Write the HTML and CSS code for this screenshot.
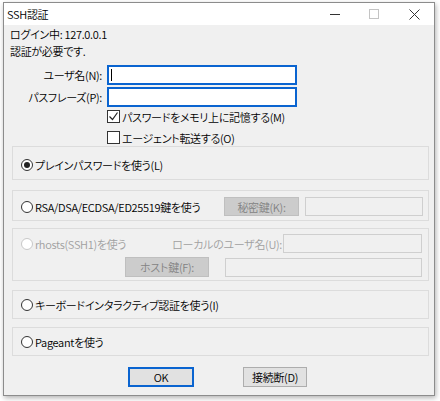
FILE: index.html
```html
<!DOCTYPE html>
<html lang="ja">
<head>
<meta charset="utf-8">
<link rel="stylesheet" href="styles.css">
</head>
<body>
<div class="window">
  <div class="titlebar">
    <span class="title">SSH認証</span>
    <div class="controls">
      <span class="ctl ctl-min"><svg width="11" height="11" viewBox="0 0 11 11"><path d="M0 5.5h10" stroke="#333" stroke-width="1"/></svg></span>
      <span class="ctl ctl-max"><svg width="10" height="10" viewBox="0 0 10 10"><rect x="0.5" y="0.5" width="9" height="9" fill="none" stroke="#c4c4c4"/></svg></span>
      <span class="ctl ctl-close"><svg width="11" height="11" viewBox="0 0 11 11"><path d="M0.5 0.5l10 10M10.5 0.5l-10 10" stroke="#333" stroke-width="1"/></svg></span>
    </div>
  </div>
  <div class="content">
    <div class="info">ログイン中: 127.0.0.1</div>
    <div class="info">認証が必要です.</div>

    <div class="form">
      <label class="flabel">ユーザ名(N):</label>
      <div class="input active"><span class="caret"></span></div>
      <label class="flabel">パスフレーズ(P):</label>
      <div class="input active"></div>
    </div>

    <div class="checks">
      <div class="check-row"><span class="checkbox checked"><svg width="11" height="11" viewBox="0 0 11 11"><path d="M1.5 5.5l3 3 5-7" fill="none" stroke="#222" stroke-width="1.2"/></svg></span><span>パスワードをメモリ上に記憶する(M)</span></div>
      <div class="check-row"><span class="checkbox"></span><span>エージェント転送する(O)</span></div>
    </div>

    <div class="group g1">
      <span class="radio checked"></span><span class="rlabel">プレインパスワードを使う(L)</span>
    </div>

    <div class="group g2">
      <span class="radio"></span><span class="rlabel">RSA/DSA/ECDSA/ED25519鍵を使う</span>
      <span class="spacer"></span>
      <span class="btn disabled btn-secret">秘密鍵(K):</span>
      <span class="field field-secret"></span>
    </div>

    <div class="group g3">
      <div class="g3-row1">
        <span class="radio disabled"></span><span class="rlabel dis">rhosts(SSH1)を使う</span>
        <span class="spacer"></span>
        <span class="dis local-label">ローカルのユーザ名(U):</span>
        <span class="field field-local"></span>
      </div>
      <div class="g3-row2">
        <span class="btn disabled btn-host">ホスト鍵(F):</span>
        <span class="field field-host"></span>
      </div>
    </div>

    <div class="group g4">
      <span class="radio"></span><span class="rlabel">キーボードインタラクティブ認証を使う(I)</span>
    </div>

    <div class="group g5">
      <span class="radio"></span><span class="rlabel">Pageantを使う</span>
    </div>

    <div class="buttons">
      <span class="btn btn-ok">OK</span>
      <span class="btn btn-disc">接続断(D)</span>
    </div>
  </div>
</div>
</body>
</html>
```

FILE: styles.css
```css
* { box-sizing: border-box; }
html, body {
  margin: 0;
  padding: 0;
  background: #ffffff;
}
body {
  font-family: "Noto Sans CJK JP", "Noto Sans", sans-serif;
  font-size: 11px;
  font-weight: 350;
  letter-spacing: -0.3px;
  font-feature-settings: "palt";
  color: #000;
  width: 440px;
  height: 401px;
  overflow: hidden;
  white-space: nowrap;
}
.window {
  margin: 2px 0 0 3px;
  width: 432px;
  height: 394px;
  border: 1px solid #8c8c8c;
  box-shadow: 1px 2px 5px rgba(0, 0, 0, 0.3);
  background: #f0f0f0;
  display: flex;
  flex-direction: column;
}
.titlebar {
  height: 22px;
  background: #fff;
  display: flex;
  align-items: center;
  padding-left: 3px;
}
.title { line-height: 22px; }
.controls {
  margin-left: auto;
  display: flex;
  align-items: center;
  height: 22px;
}
.ctl { display: flex; align-items: center; justify-content: center; }
.ctl-min { margin-right: 28px; }
.ctl-max { margin-right: 30px; }
.ctl-close { margin-right: 14px; }

.content {
  padding: 1px 0 0 6px;
  display: flex;
  flex-direction: column;
}
.info {
  height: 17px;
  line-height: 17px;
}
.form {
  display: grid;
  grid-template-columns: 92px 190px;
  column-gap: 5px;
  row-gap: 2px;
  margin-top: 5px;
  align-items: center;
}
.flabel {
  text-align: right;
}
.input {
  height: 20px;
  background: #fff;
  border: 2px solid #0a64d0;
  position: relative;
}
.caret {
  position: absolute;
  left: 2px;
  top: 2px;
  width: 1px;
  height: 12px;
  background: #000;
}
.checks {
  margin-left: 97px;
  margin-top: -1px;
}
.check-row {
  height: 21px;
  display: flex;
  align-items: center;
}
.checkbox {
  width: 13px;
  height: 13px;
  border: 1px solid #333;
  background: #fff;
  margin-right: 2px;
  display: flex;
  align-items: center;
  justify-content: center;
}

.group {
  margin-left: 2px;
  width: 417px;
  border: 1px solid #dcdcdc;
  display: flex;
  align-items: center;
  padding: 0 5px 0 8px;
}
.g1 { height: 34px; margin-top: -2px; padding-top: 3px; }
.g2 { height: 31px; margin-top: 10px; padding-top: 2px; }
.g3 { height: 53px; margin-top: 7px; flex-direction: column; align-items: stretch; padding-top: 5px; padding-right: 6px; }
.g4 { height: 29px; margin-top: 9px; }
.g5 { height: 29px; margin-top: 8px; }

.radio {
  width: 12px;
  height: 12px;
  border: 1px solid #333;
  border-radius: 50%;
  background: #fff;
  flex: none;
  margin-right: 2px;
  position: relative;
}
.radio.checked::after {
  content: "";
  position: absolute;
  left: 2px;
  top: 2px;
  width: 6px;
  height: 6px;
  border-radius: 50%;
  background: #222;
}
.radio.disabled { border-color: #c8c8c8; }
.spacer { flex: 1; }
.dis { color: #a0a0a0; }

.btn {
  display: flex;
  align-items: center;
  justify-content: center;
  background: #e1e1e1;
  border: 1px solid #adadad;
  height: 20px;
  color: #000;
}
.btn.disabled {
  background: #cccccc;
  border-color: #bfbfbf;
  color: #838383;
}
.btn-secret { width: 75px; height: 19px; }
.field {
  height: 19px;
  border: 1px solid #cfcfcf;
  background: #f0f0f0;
}
.field-secret { width: 118px; margin-left: 6px; }
.g3-row1 {
  display: flex;
  align-items: center;
  height: 19px;
}
.local-label { margin-right: 1px; }
.field-local { width: 139px; }
.g3-row2 {
  display: flex;
  align-items: center;
  margin-top: 4px;
  height: 20px;
  padding-left: 104px;
}
.btn-host { width: 84px; }
.field-host { flex: 1; margin-left: 16px; }

.buttons {
  display: flex;
  margin-top: 11px;
  padding-left: 118px;
}
.btn-ok {
  width: 66px;
  height: 20px;
  border: 2px solid #0a64d0;
}
.btn-disc {
  width: 64px;
  height: 20px;
  margin-left: 49px;
}
```
